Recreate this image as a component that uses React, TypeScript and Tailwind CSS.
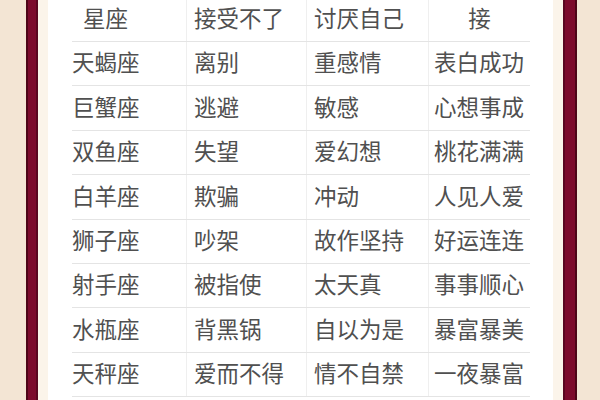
import React from "react";

const rows: string[][] = [
  ["天蝎座", "离别", "重感情", "表白成功"],
  ["巨蟹座", "逃避", "敏感", "心想事成"],
  ["双鱼座", "失望", "爱幻想", "桃花满满"],
  ["白羊座", "欺骗", "冲动", "人见人爱"],
  ["狮子座", "吵架", "故作坚持", "好运连连"],
  ["射手座", "被指使", "太天真", "事事顺心"],
  ["水瓶座", "背黑锅", "自以为是", "暴富暴美"],
  ["天秤座", "爱而不得", "情不自禁", "一夜暴富"],
];

export default function App() {
  return (
    <div
      className="flex w-[600px] h-[400px] overflow-hidden bg-[#f3e5d4] text-[#505050]"
      style={{ fontFamily: '"Noto Sans CJK SC", "Noto Sans", sans-serif' }}
    >
      <div className="w-[26px] shrink-0 bg-[#f3e5d4]" />
      <div className="w-[12px] shrink-0 bg-[#7c0a2c] border-l-2 border-r-2 border-l-[#4d0518] border-r-[#5a0620]" />
      <div className="w-[10px] shrink-0 bg-[#fbf4ea]" />
      <div className="w-[505px] shrink-0 bg-white pl-[24px]">
        <div className="w-[458px] text-[22.5px] leading-none">
          <div className="flex h-[42px] border-b border-[#e4e4e4]">
            <div className="w-[114px] flex items-center pl-[11px]">
              <span className="-mt-[7px]">星座</span>
            </div>
            <div className="w-[120px] flex items-center pl-[7px] border-l border-[#efefef]">
              <span className="-mt-[7px]">接受不了</span>
            </div>
            <div className="w-[122px] flex items-center pl-[7px] border-l border-[#efefef]">
              <span className="-mt-[7px]">讨厌自己</span>
            </div>
            <div className="flex-1 flex items-center justify-center border-l border-[#efefef]">
              <span className="-mt-[7px]">接</span>
            </div>
          </div>
          {rows.map((r, i) => (
            <div key={i} className="flex h-[44.4px] border-b border-[#e4e4e4]">
              <div className="w-[114px] flex items-center"><span className="-mt-[4px]">{r[0]}</span></div>
              <div className="w-[120px] flex items-center pl-[7px] border-l border-[#efefef]"><span className="-mt-[4px]">{r[1]}</span></div>
              <div className="w-[122px] flex items-center pl-[7px] border-l border-[#efefef]"><span className="-mt-[4px]">{r[2]}</span></div>
              <div className="flex-1 flex items-center pl-[5px] border-l border-[#efefef]"><span className="-mt-[4px]">{r[3]}</span></div>
            </div>
          ))}
        </div>
      </div>
      <div className="w-[10px] shrink-0 bg-[#fbf4ea]" />
      <div className="w-[14px] shrink-0 bg-[#7c0a2c] border-l-2 border-r-2 border-l-[#5a0620] border-r-[#4d0518]" />
      <div className="flex-1 bg-[#f3e5d4]" />
    </div>
  );
}
